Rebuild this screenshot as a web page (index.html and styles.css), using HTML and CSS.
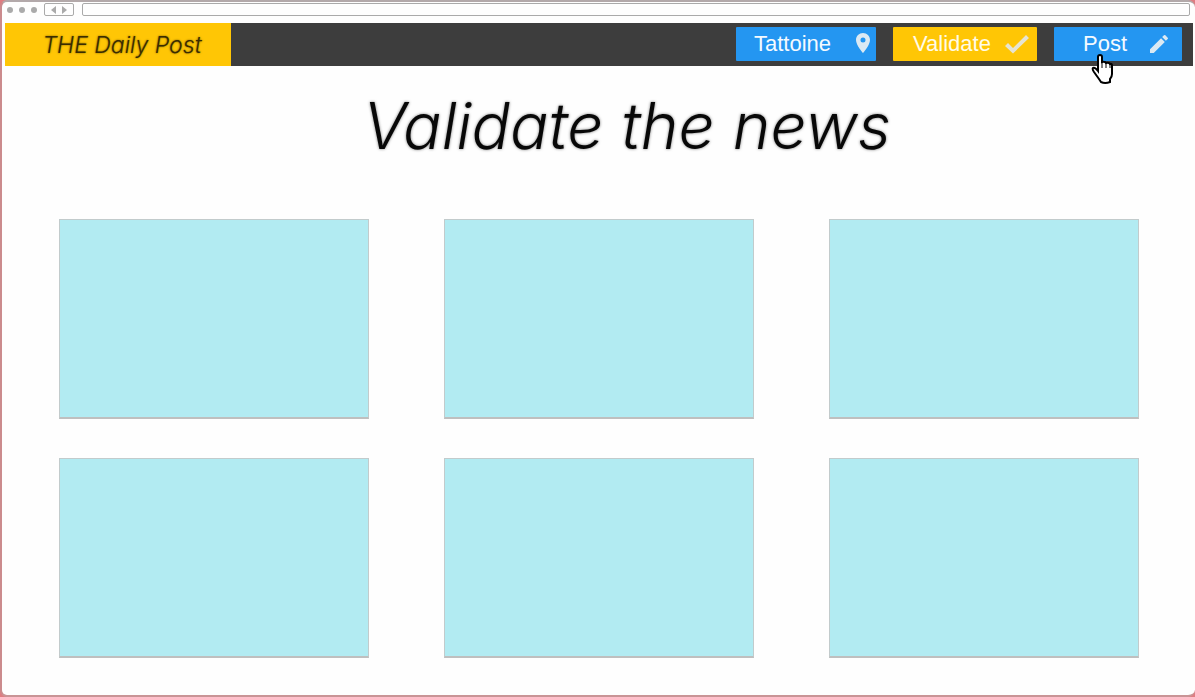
FILE: index.html
```html
<!DOCTYPE html>
<html lang="en">
<head>
<meta charset="utf-8">
<title>THE Daily Post</title>
<link rel="stylesheet" href="styles.css">
</head>
<body>
<div class="window">
  <div class="chrome">
    <div class="dots"><span class="dot"></span><span class="dot"></span><span class="dot"></span></div>
    <div class="nav">
      <button class="nav-button" type="button" aria-label="Back"><svg width="5" height="8" viewBox="0 0 5 8"><path d="M5 0v8L0 4z"/></svg></button>
      <button class="nav-button" type="button" aria-label="Forward"><svg width="5" height="8" viewBox="0 0 5 8"><path d="M0 0v8l5-4z"/></svg></button>
    </div>
    <input class="address" type="text" aria-label="Address">
  </div>
  <header class="header">
    <a class="logo" href="#">THE Daily Post</a>
    <nav class="actions">
      <button class="action location" type="button"><span class="label">Tattoine</span>
        <svg class="icon" width="24" height="24" viewBox="0 0 24 24"><path d="M12 1C8.100 1 5 4.100 5 8c0 5.300 7 13 7 13s7-7.700 7-13c0-3.900-3.100-7-7-7zm0 9.500a2.500 2.500 0 1 1 0-5 2.500 2.500 0 0 1 0 5z"/></svg>
      </button>
      <button class="action validate" type="button"><span class="label">Validate</span>
        <svg class="icon" width="24" height="24" viewBox="0 0 24 24"><path d="M0 14l3-3 5 5L21 3l3 3L8 21.500z"/></svg>
      </button>
      <button class="action post" type="button"><span class="label">Post</span>
        <svg class="icon" width="24" height="24" viewBox="0 0 24 24"><path d="M3 17.250V21h3.750L17.810 9.940l-3.750-3.750L3 17.250zM20.710 7.040a1 1 0 0 0 0-1.410l-2.340-2.340a1 1 0 0 0-1.410 0l-1.830 1.830 3.750 3.750 1.830-1.830z"/></svg>
        <svg class="cursor" width="24" height="32" viewBox="0 0 24 32"><path d="M8 18V4q0-2 2-2t2 2v5q3-1 4 1 3-1 4 1 2-1 2 2v8q0 3-2 5v3q-5 2-9 0l-2-3-5-7q-2-3-1-4 2-1 5 3z" fill="#fff" stroke="#000" stroke-width="2"/><path d="M12 9v6M16 10v5M20 11v4" fill="none" stroke="#000" stroke-width="1"/></svg>
      </button>
    </nav>
  </header>
  <main class="main">
    <h1 class="title">Validate the news</h1>
    <div class="grid">
      <article class="card"></article>
      <article class="card"></article>
      <article class="card"></article>
      <article class="card"></article>
      <article class="card"></article>
      <article class="card"></article>
    </div>
  </main>
</div>
</body>
</html>
```
FILE: styles.css
```css
* { box-sizing: border-box; }

body {
  margin: 0;
  background: #df7d82;
  font-family: "Liberation Sans", Arial, sans-serif;
}

.window {
  min-height: 100vh;
  padding: 0 0 36px 3px;
  background: #fefefe;
  border: 2px solid #b3a9aa;
  border-right: 0;
  border-left-color: #cb8b8d;
  border-bottom-color: #c99496;
  border-radius: 7px;
}

.chrome {
  display: flex;
  align-items: center;
  height: 21px;
  padding: 0 5px 6px 2px;
}

.dots { display: flex; gap: 6px; }

.dot {
  width: 6px;
  height: 6px;
  border-radius: 50%;
  background: #aaa;
}

.nav {
  display: flex;
  justify-content: center;
  gap: 6px;
  width: 30px;
  height: 13px;
  margin: 0 8px 0 7px;
  border: 1px solid #aaa;
  border-radius: 2px;
}

.nav-button {
  display: flex;
  align-items: center;
  padding: 0;
  border: 0;
  background: none;
  fill: #aaa;
}

.address {
  flex: 1;
  min-width: 0;
  height: 13px;
  padding: 0 4px;
  border: 1px solid #aaa;
  border-radius: 2px;
  background: #fefefe;
  font-size: 10px;
}

.header {
  display: flex;
  justify-content: space-between;
  height: 43px;
  margin-right: 2px;
  background: #3d3d3d;
}

.logo {
  display: flex;
  align-items: center;
  justify-content: center;
  width: 226px;
  padding-left: 8px;
  background: #ffc605;
  color: #3a2c00;
  font: italic 300 23px Inter, sans-serif;
  text-decoration: none;
  text-shadow: 0 0 2px #6b5200;
}

.actions {
  display: flex;
  align-items: center;
  gap: 17px;
  padding: 0 11px 1px 0;
}

.action {
  position: relative;
  display: flex;
  align-items: center;
  justify-content: space-between;
  height: 34px;
  padding: 0 1px 0 18px;
  border: 0;
  border-radius: 1px;
  background: #2496f1;
  color: #f4faff;
  font: 22px "Liberation Sans", Arial, sans-serif;
}

.icon { fill: #dbe9f3; }

.location { width: 140px; }

.validate {
  width: 144px;
  padding: 0 8px 0 20px;
  background: #ffc605;
  color: #fffbe8;
}

.validate .icon { fill: #e6e4d2; }

.post { width: 128px; padding: 0 11px 0 29px; }

.cursor {
  position: absolute;
  left: 36px;
  top: 26px;
}

.main { padding: 20px 56px 0 54px; }

.title {
  margin: 0 0 53px;
  text-align: center;
  color: #080808;
  font: italic 300 64px/80px Inter, sans-serif;
  text-shadow: 0 0 3px #777;
  padding-left: 56px;
}

.grid {
  display: grid;
  grid-template-columns: repeat(3, 1fr);
  gap: 39px 75px;
}

.card {
  aspect-ratio: 310 / 200;
  background: #b2ebf2;
  border: 1px solid #c2cbcc;
  border-bottom: 2px solid #bfbfbf;
}
```
